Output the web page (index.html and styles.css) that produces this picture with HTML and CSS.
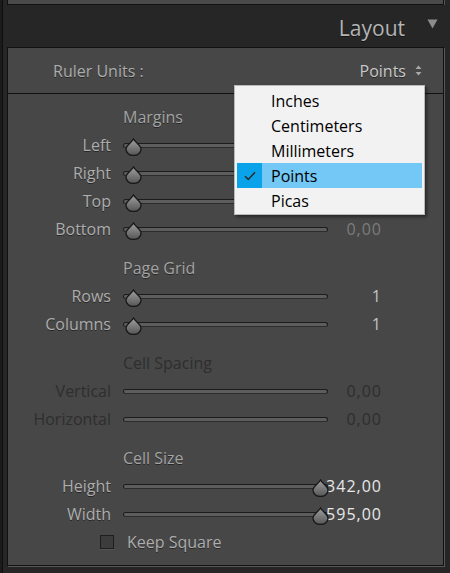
FILE: index.html
```html
<!DOCTYPE html>
<html>
<head>
<meta charset="utf-8">
<link rel="stylesheet" href="styles.css">
</head>
<body>
<div class="shell">
  <div class="cap"></div>
  <div class="header">
    <span class="title">Layout</span>
    <svg class="disclose" width="11" height="10" viewBox="0 0 11 10"><path d="M0.5 0.5 H10.5 L5.5 9.5 Z" fill="#8c8c8c"/></svg>
  </div>
  <div class="group">
    <div class="ruler">
      <span class="ruler-label">Ruler Units :</span>
      <span class="ruler-value">Points
        <svg class="updown" width="7" height="11" viewBox="0 0 7 11"><path d="M3.5 0.5 L6.5 4 H0.5 Z M3.5 10.5 L6.5 7 H0.5 Z" fill="#a8a8a8"/></svg>
      </span>
    </div>
    <div class="main">
      <div class="section">
        <div class="head">Margins</div>
        <div class="row"><span class="label">Left</span><div class="slider"><div class="track"></div><span class="thumb" style="left:2px"></span></div><span class="value dim"></span></div>
        <div class="row"><span class="label">Right</span><div class="slider"><div class="track"></div><span class="thumb" style="left:2px"></span></div><span class="value dim"></span></div>
        <div class="row"><span class="label">Top</span><div class="slider"><div class="track"></div><span class="thumb" style="left:2px"></span></div><span class="value dim"></span></div>
        <div class="row"><span class="label">Bottom</span><div class="slider"><div class="track"></div><span class="thumb" style="left:2px"></span></div><span class="value dim">0,00</span></div>
      </div>
      <div class="section">
        <div class="head">Page Grid</div>
        <div class="row"><span class="label">Rows</span><div class="slider"><div class="track"></div><span class="thumb" style="left:2px"></span></div><span class="value">1</span></div>
        <div class="row"><span class="label">Columns</span><div class="slider"><div class="track"></div><span class="thumb" style="left:2px"></span></div><span class="value">1</span></div>
      </div>
      <div class="section disabled">
        <div class="head">Cell Spacing</div>
        <div class="row"><span class="label">Vertical</span><div class="slider"><div class="track"></div></div><span class="value">0,00</span></div>
        <div class="row"><span class="label">Horizontal</span><div class="slider"><div class="track"></div></div><span class="value">0,00</span></div>
      </div>
      <div class="section">
        <div class="head">Cell Size</div>
        <div class="row"><span class="label">Height</span><div class="slider"><div class="track"></div><span class="thumb" style="left:189px"></span></div><span class="value bright">342,00</span></div>
        <div class="row"><span class="label">Width</span><div class="slider"><div class="track"></div><span class="thumb" style="left:189px"></span></div><span class="value bright">595,00</span></div>
        <div class="check-row"><span class="box"></span><span class="check-label">Keep Square</span></div>
      </div>
    </div>
  </div>
</div>

<div class="menu">
  <div class="item"><span class="mark"></span><span class="text">Inches</span></div>
  <div class="item"><span class="mark"></span><span class="text">Centimeters</span></div>
  <div class="item"><span class="mark"></span><span class="text">Millimeters</span></div>
  <div class="item selected"><span class="mark"><svg width="12" height="10" viewBox="0 0 12 10"><path d="M1 5.2 L4.3 8.4 L11 1.2" fill="none" stroke="#2b2b2b" stroke-width="1.5"/></svg></span><span class="text">Points</span></div>
  <div class="item"><span class="mark"></span><span class="text">Picas</span></div>
</div>
</body>
</html>
```

FILE: styles.css
```css
html, body {
  margin: 0;
  padding: 0;
}
body {
  width: 450px;
  height: 573px;
  overflow: hidden;
  position: relative;
  background: linear-gradient(to right, #1b1b1b 0, #1b1b1b 2px, #0e0e0e 2px, #0e0e0e 3px, #262626 3px);
  font-family: "Open Sans", "Noto Sans", "Liberation Sans", sans-serif;
}
.shell {
  margin-left: 7px;
  width: 437px;
}
.cap {
  height: 4px;
  background: #4a4a4a;
  border: 1px solid #111;
  border-top: none;
  box-shadow: 1px 0 0 #555;
}
.header {
  height: 42px;
  display: flex;
  justify-content: flex-end;
  align-items: center;
  padding-right: 6px;
}
.title {
  color: #b4b4b4;
  font-size: 21px;
  margin-right: 22px;
  margin-top: 3px;
  text-shadow: 0 1px 0 rgba(0,0,0,0.5);
}
.disclose {
  margin-top: -4px;
}
.group {
  border: 1px solid #111;
  background: #474747;
  box-shadow: 1px 1px 0 #575757;
}
.ruler {
  height: 45px;
  border-bottom: 1px solid #111;
  display: flex;
  align-items: center;
  justify-content: space-between;
  padding-left: 45px;
  padding-right: 21px;
  font-size: 16px;
  text-shadow: 0 1px 0 rgba(0,0,0,0.45);
}
.ruler-label {
  color: #acacac;
}
.ruler-value {
  color: #c9c9c9;
  display: flex;
  align-items: center;
  gap: 9px;
}
.main {
  height: 471px;
  padding-top: 9px;
  box-sizing: border-box;
  font-size: 16px;
}
.section {
  margin-bottom: 11px;
}
.head {
  height: 28px;
  line-height: 28px;
  padding-left: 115px;
  color: #a3a3a3;
  text-shadow: 0 1px 0 rgba(0,0,0,0.45);
}
.row {
  height: 28px;
  display: flex;
  align-items: center;
}
.label {
  width: 103px;
  text-align: right;
  color: #adadad;
  text-shadow: 0 1px 0 rgba(0,0,0,0.45);
}
.slider {
  position: relative;
  width: 205px;
  height: 28px;
  margin-left: 12px;
}
.track {
  position: absolute;
  left: 0;
  right: 0;
  top: 12px;
  height: 5px;
  box-sizing: border-box;
  border-radius: 3px;
  background: #5d5d5d;
  border: 1px solid #1c1c1c;
  border-bottom-color: #2c2c2c;
}
.thumb {
  position: absolute;
  top: 7px;
  width: 17px;
  height: 18px;
  z-index: 2;
  background: url("data:image/svg+xml;utf8,<svg xmlns='http://www.w3.org/2000/svg' width='17' height='18' viewBox='0 0 17 18'><defs><linearGradient id='g' x1='0' y1='0' x2='0' y2='1'><stop offset='0' stop-color='%23a0a0a0'/><stop offset='1' stop-color='%23555555'/></linearGradient></defs><path d='M8.5 1 C10 4.5 16 7 16 11.2 A7.5 6.3 0 0 1 1 11.2 C1 7 7 4.5 8.5 1 Z' fill='url(%23g)' stroke='%23181818' stroke-width='1.3'/></svg>") no-repeat;
}
.value {
  width: 61px;
  margin-left: -7px;
  margin-right: -1px;
  text-align: right;
  color: #c2c2c2;
  position: relative;
  z-index: 1;
  white-space: nowrap;
  letter-spacing: 1px;
}
.value.dim {
  color: #7c7c7c;
}
.value.bright {
  color: #e8e8e8;
}
.disabled .head,
.disabled .label,
.disabled .value {
  color: #2e2e2e;
  text-shadow: none;
}
.check-row {
  height: 28px;
  display: flex;
  align-items: center;
  padding-left: 92px;
}
.box {
  width: 14px;
  height: 14px;
  box-sizing: border-box;
  border: 1px solid #1e1e1e;
  background: #3c3c3c;
  box-shadow: 0 1px 0 #555;
}
.check-label {
  margin-left: 13px;
  color: #adadad;
  text-shadow: 0 1px 0 rgba(0,0,0,0.45);
}
.menu {
  position: absolute;
  left: 234px;
  top: 85px;
  width: 185px;
  padding: 2px 2px 1px 2px;
  background: #f2f2f2;
  border: 1px solid #b9b9b9;
  box-shadow: 2px 2px 3px rgba(0,0,0,0.45);
  font-family: "Open Sans", "Noto Sans", "Liberation Sans", sans-serif;
  font-size: 16px;
  z-index: 5;
}
.item {
  height: 25px;
  display: flex;
  align-items: center;
  color: #000;
}
.mark {
  width: 25px;
  height: 25px;
  display: flex;
  align-items: center;
  justify-content: center;
  margin-right: 9px;
}
.item.selected {
  background: #73c8f6;
}
.item.selected .mark {
  background: #0aa3ea;
}
```
